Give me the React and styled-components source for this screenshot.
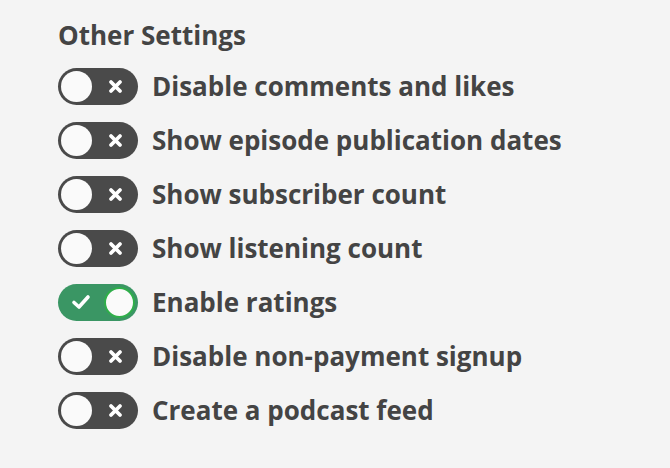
import React, { useState } from "react";
import styled, { createGlobalStyle } from "styled-components";

const GlobalStyle = createGlobalStyle`
    body {
        margin: 0;
        background: #f4f4f4;
        font-family: "Open Sans", "Liberation Sans", sans-serif;
    }
`;

const settings = [
    {id: "comments", label: "Disable comments and likes", on: false},
    {id: "dates", label: "Show episode publication dates", on: false},
    {id: "subscribers", label: "Show subscriber count", on: false},
    {id: "listening", label: "Show listening count", on: false},
    {id: "ratings", label: "Enable ratings", on: true},
    {id: "signup", label: "Disable non-payment signup", on: false},
    {id: "feed", label: "Create a podcast feed", on: false},
];

function CrossIcon() {
    return (
        <svg width="15" height="15" viewBox="0 0 15 15">
            <path d="M3 3 L12 12 M12 3 L3 12" stroke="#fff" strokeWidth="3.8" strokeLinecap="round"/>
        </svg>
    );
}

function CheckIcon() {
    return (
        <svg width="20" height="16" viewBox="0 0 20 16">
            <path d="M3 8.5 L8 13 L17 3" stroke="#fff" strokeWidth="3.6" fill="none" strokeLinecap="round" strokeLinejoin="round"/>
        </svg>
    );
}

function Toggle({on, onClick}) {
    return (
        <Track $on={on} onClick={onClick}>
            {on ? (
                <>
                    <IconSlot><CheckIcon/></IconSlot>
                    <Knob $on={on}/>
                </>
            ) : (
                <>
                    <Knob $on={on}/>
                    <IconSlot><CrossIcon/></IconSlot>
                </>
            )}
        </Track>
    );
}

export default function App() {
    const [values, setValues] = useState(
        Object.fromEntries(settings.map(s => [s.id, s.on]))
    );

    return (
        <Page>
            <GlobalStyle/>
            <Title>Other Settings</Title>
            <List>
                {settings.map(s => (
                    <Row key={s.id}>
                        <Toggle
                            on={values[s.id]}
                            onClick={() => setValues(v => ({...v, [s.id]: !v[s.id]}))}
                        />
                        <Label>{s.label}</Label>
                    </Row>
                ))}
            </List>
        </Page>
    );
}

const Page = styled.div`
    width: 670px;
    height: 468px;
    box-sizing: border-box;
    padding: 20px 0 0 58px;
    background: #f4f4f4;
    color: #444;
`;

const Title = styled.h3`
    margin: 0 0 18px;
    font-size: 26px;
    font-weight: 700;
    line-height: 30px;
    color: #444;
`;

const List = styled.div`
    display: flex;
    flex-direction: column;
    gap: 18px;
`;

const Row = styled.div`
    display: flex;
    align-items: center;
    gap: 14px;
    height: 36px;
`;

const Track = styled.div`
    width: 80px;
    height: 37px;
    box-sizing: border-box;
    border-radius: 19px;
    padding: 3px;
    display: flex;
    align-items: center;
    justify-content: space-between;
    background: ${p => (p.$on ? "#3a9664" : "#4a4a4a")};
    cursor: pointer;
    flex-shrink: 0;
`;

const Knob = styled.div`
    width: 31px;
    height: 31px;
    box-sizing: border-box;
    border-radius: 50%;
    background: #fafafa;
    border: ${p => (p.$on ? "2px solid #2fae4a" : "none")};
`;

const IconSlot = styled.div`
    width: 40px;
    display: flex;
    justify-content: center;
    align-items: center;
`;

const Label = styled.span`
    font-size: 26px;
    font-weight: 700;
    color: #444;
    white-space: nowrap;
`;
